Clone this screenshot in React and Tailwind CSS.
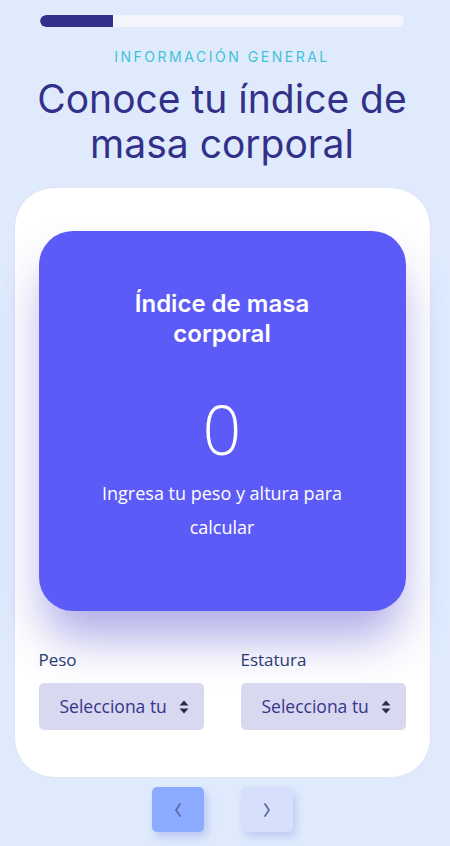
import React from 'react';

const heading = { fontFamily: 'Inter, "Noto Sans", sans-serif' };

function Select() {
  return (
    <div className="flex h-[47px] items-center justify-between rounded-[5px] bg-[#d9d8f1] pl-[21px] pr-[15px] text-[17.5px] text-[#35358a]">
      <span>Selecciona tu</span>
      <svg width="10" height="14" viewBox="0 0 10 14" className="text-[#2c2c4a]">
        <path d="M5 0.5 L9.5 5.5 H0.5 Z" fill="currentColor" />
        <path d="M5 13.5 L9.5 8.5 H0.5 Z" fill="currentColor" />
      </svg>
    </div>
  );
}

export default function App() {
  return (
    <div className="min-h-[846px] bg-[#dfebfd] flex flex-col items-center pr-[6px]" style={{ fontFamily: '"Open Sans", "Noto Sans", sans-serif' }}>
      <div className="mt-[15px] flex h-[12px] w-[364px] overflow-hidden rounded-full bg-[#f4f5fc]">
        <div className="h-full w-[73px] rounded-l-full bg-[#33308c]" />
      </div>

      <p className="mt-[19px] text-[14px] tracking-[0.18em] text-[#3fc2d9]" style={heading}>INFORMACIÓN GENERAL</p>
      <h1 className="mt-[9px] text-center text-[39px] leading-[45px] text-[#33308a]" style={heading}>
        Conoce tu índice de<br />masa corporal
      </h1>

      <div className="mt-[21px] w-[417px] rounded-[40px] border border-[#dfe3f3] bg-white px-[24px] pt-[43px] pb-[47px]">
        <div className="flex h-[380px] flex-col items-center rounded-[34px] bg-[#5d5bf7] pt-[58px] text-white shadow-[0_32px_48px_-6px_rgba(70,64,200,0.45)]">
          <h2 className="text-center text-[24px] font-semibold leading-[30px]" style={heading}>Índice de masa<br />corporal</h2>
          <div className="mt-[42px] text-[68px] font-thin leading-[76px]" style={{ fontFamily: '"Open Sans", sans-serif' }}>0</div>
          <p className="mt-[9px] text-center text-[18px] leading-[34px] px-[40px]">Ingresa tu peso y altura para calcular</p>
        </div>

        <div className="mt-[38px] grid grid-cols-2 gap-x-[37px]">
          <div className="flex flex-col gap-[12px]">
            <label className="text-[17px] leading-[22px] text-[#2a3a6e]">Peso</label>
            <Select />
          </div>
          <div className="flex flex-col gap-[12px]">
            <label className="text-[17px] leading-[22px] text-[#2a3a6e]">Estatura</label>
            <Select />
          </div>
        </div>
      </div>

      <div className="mt-[9px] flex gap-[37px]">
        <button className="flex h-[45px] w-[52px] items-center justify-center rounded-[5px] bg-[#8aabff] shadow-[3px_5px_8px_rgba(120,130,220,0.35)]">
          <svg width="10" height="16" viewBox="0 0 10 16"><path d="M7 2 L3 8 L7 14" stroke="#5e6aa6" strokeWidth="1.8" fill="none" strokeLinecap="round" strokeLinejoin="round" /></svg>
        </button>
        <button className="flex h-[45px] w-[52px] items-center justify-center rounded-[5px] bg-[#d6e0fa] shadow-[3px_5px_8px_rgba(120,130,220,0.3)]">
          <svg width="10" height="16" viewBox="0 0 10 16"><path d="M3 2 L7 8 L3 14" stroke="#5e6aa6" strokeWidth="1.8" fill="none" strokeLinecap="round" strokeLinejoin="round" /></svg>
        </button>
      </div>
    </div>
  );
}
